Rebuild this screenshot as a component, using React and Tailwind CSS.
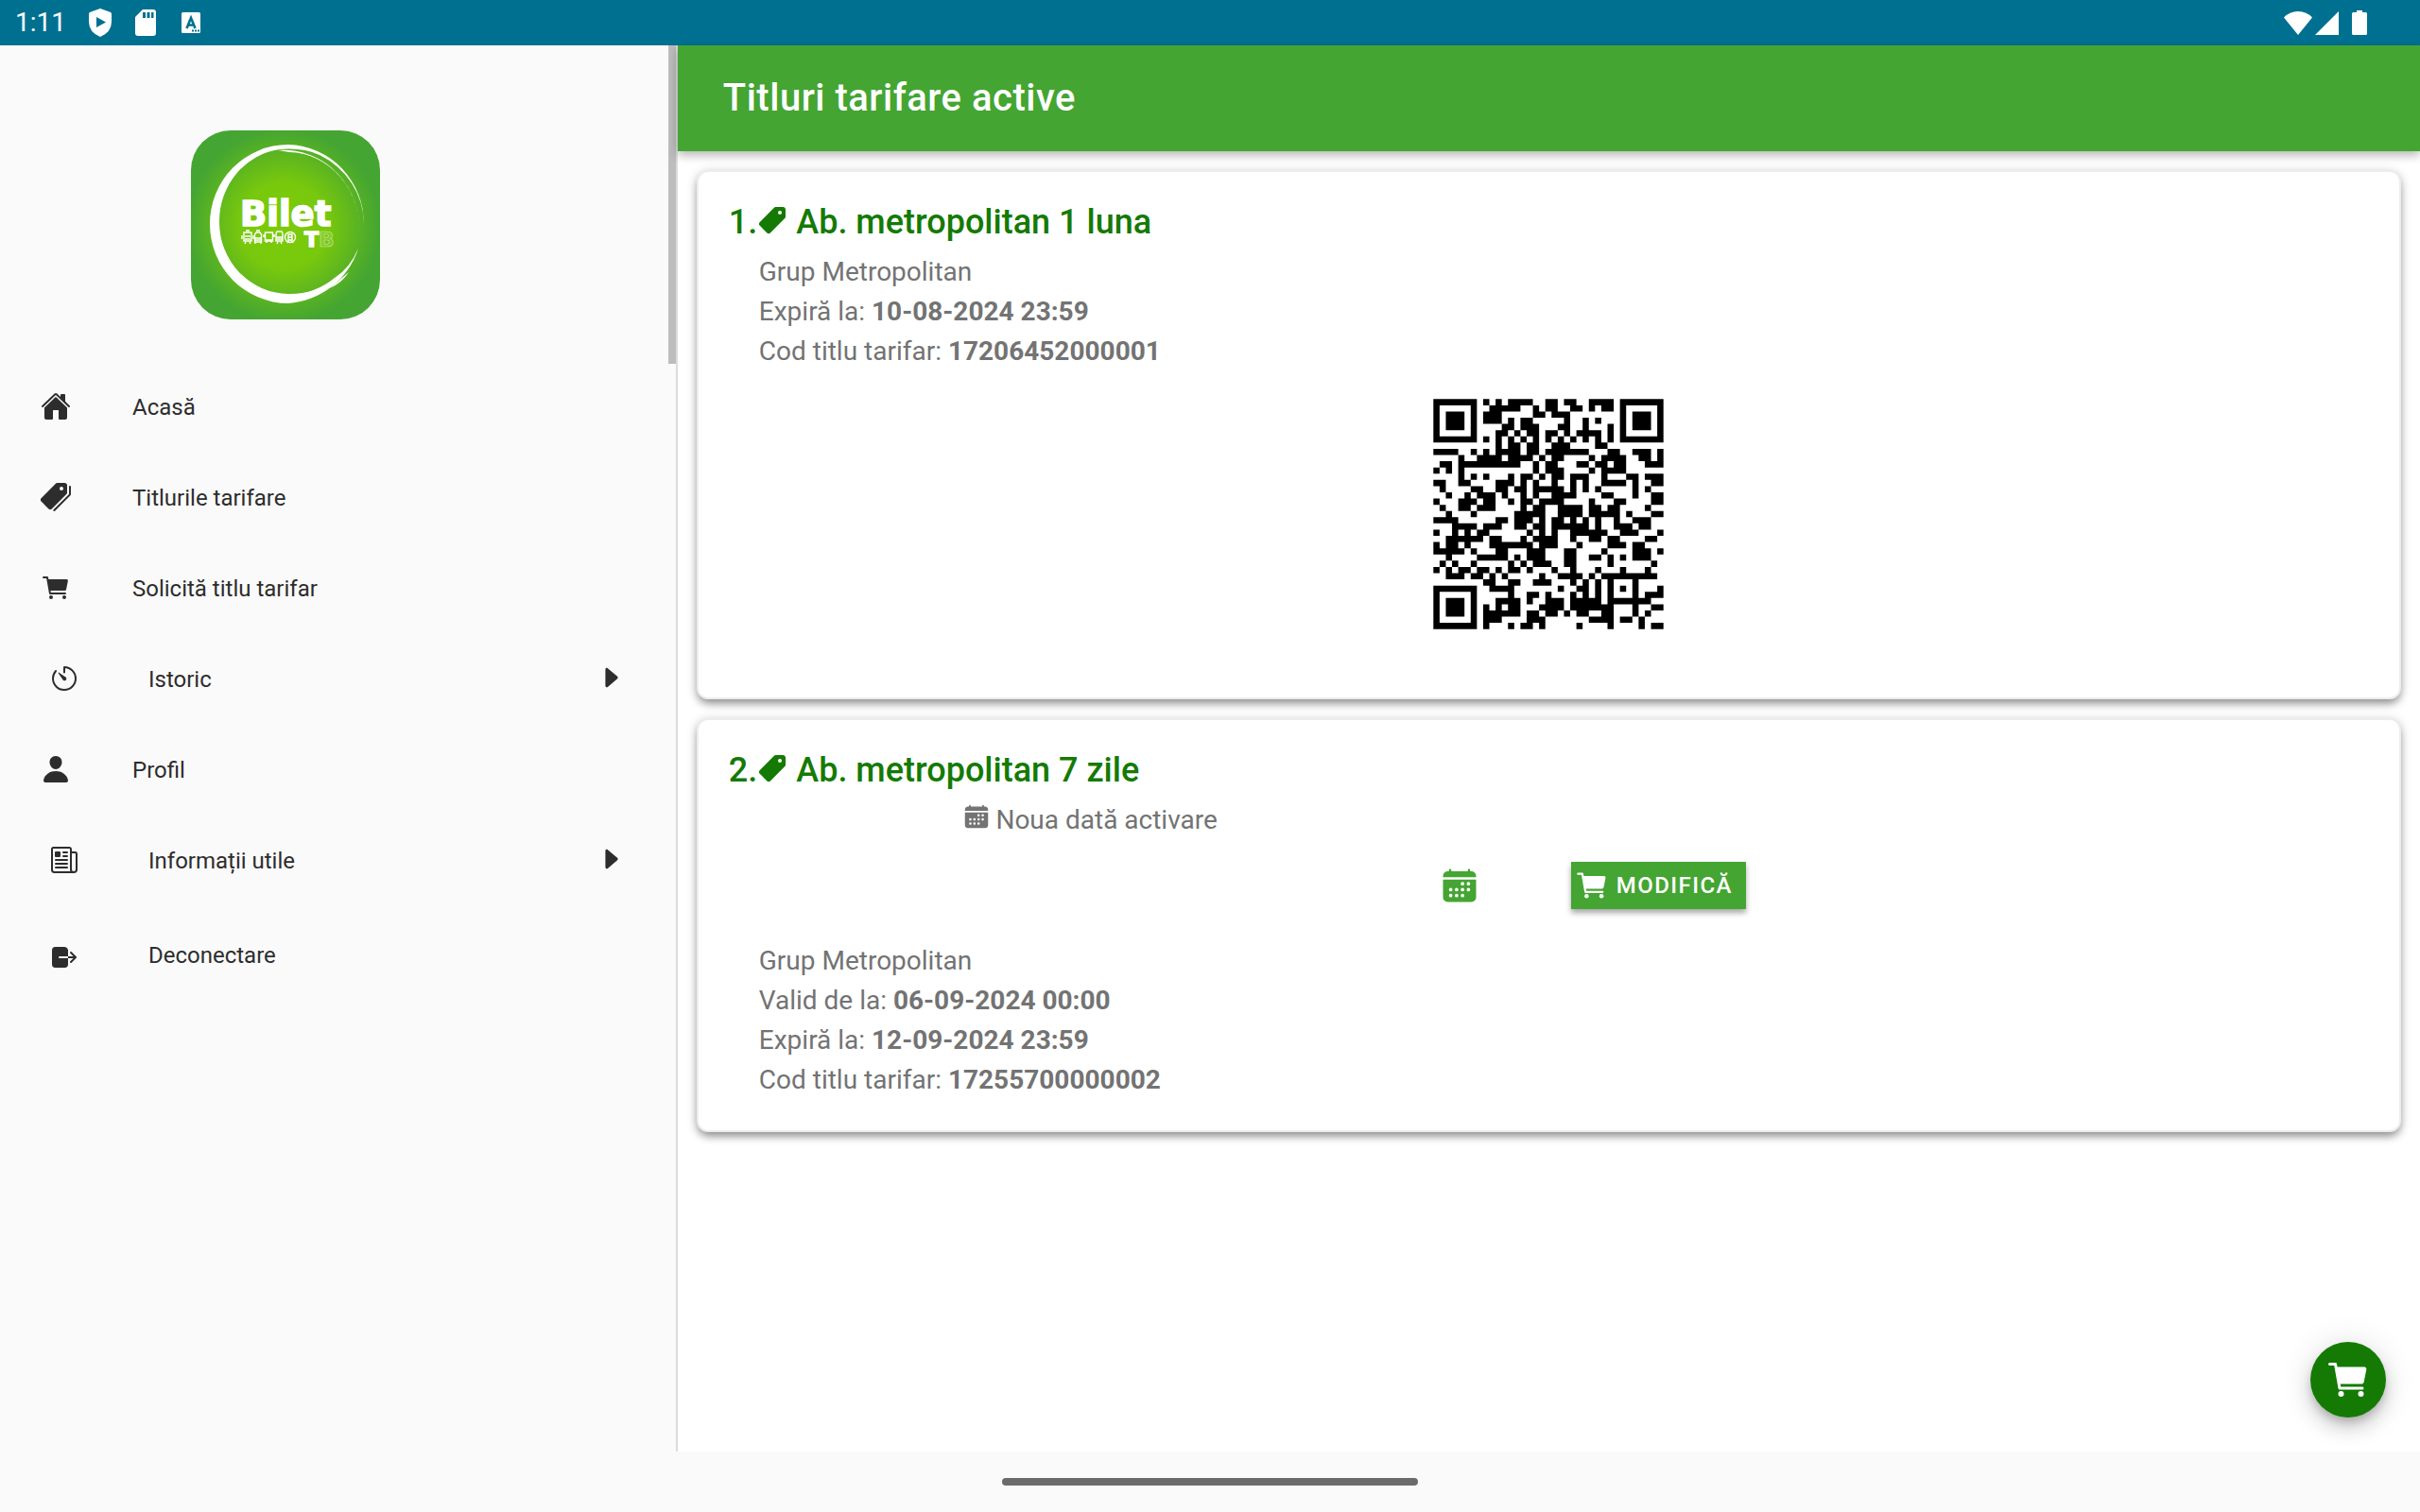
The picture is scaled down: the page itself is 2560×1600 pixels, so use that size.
import React from 'react';
import {
  IoHome,
  IoPricetags,
  IoPricetag,
  IoCart,
  IoTimerOutline,
  IoPerson,
  IoNewspaperOutline,
  IoLogOut,
  IoCaretForward,
  IoCalendar,
} from 'react-icons/io5';

const menu = [
  { label: 'Acasă', icon: IoHome },
  { label: 'Titlurile tarifare', icon: IoPricetags },
  { label: 'Solicită titlu tarifar', icon: IoCart },
  { label: 'Istoric', icon: IoTimerOutline, nested: true, caret: true },
  { label: 'Profil', icon: IoPerson },
  { label: 'Informații utile', icon: IoNewspaperOutline, nested: true, caret: true },
];

// dark runs per row, "from-to" or a single column
const qrRows = [
  '0-6 8 10 12-15 18-19 21-22 25-28 30-36',
  '0 6 9-13 16 18-19 22-23 25 27-28 30 36',
  '0 2-4 6 8-10 16-17 19-21 30 32-34 36',
  '0 2-4 6 8-10 12 14-15 21 24 26 30 32-34 36',
  '0 2-4 6 11-12 14-16 20-21 24 28 30 32-34 36',
  '0 6 10-11 13 15-16 18-19 21 23-26 28 30 36',
  '0-6 8 10 12 14 16 18 20 22 24 26 28 30-36',
  '10 12-13 15-16 19-21 26-27',
  '0-3 6 8 10-13 15-16 18-24 28-29 32-34 36',
  '4 7-10 12-15 17 19-20 25 27-30 33-34 36',
  '1-2 4-13 16 18-19 23-24 26-27 29-30 34-36',
  '0 2 4 16 18-20 25 27-30',
  '4 6 8 12 14-15 17 19-20 22-24 27 31-32 34-36',
  '0-1 4-5 10-12 14 16 19 22 24 27-30 32 35-36',
  '1 6-7 10-11 13-14 16-20 22 24 26 32 34',
  '2 5 7-9 11 14 16 19-22 27-28 32 35-36',
  '0 4-6 8-9 12 14-15 17-20 25 29-30 35-36',
  '1 4-5 7-9 14 16-17 20-23 25-26 28-29 34',
  '2 6 13-17 20-23 25-29 31 35-36',
  '0-3 10-11 13-15 17 19-20 22 24 26 29 32-34',
  '3-6 8-10 13-14 16-17 19-24 26 29-31 33-34',
  '0 3 5 7-8 15 17 19 22-27 30-32 36',
  '2-7 9-10 14 16-19 22 25-26 28-29 34-35',
  '0 2-3 5 9-15 17-19 23 28-30 32-33',
  '0-4 6 10-11 15-17 21-22 27 32-34 36',
  '2 7-11 13 15-17 21-22 25-26 28 30 32-34',
  '1 3 6 12 14 16-18 21-22 28 35',
  '0 2 4-5 7-8 10 12-13 15 19 22 26 30 34',
  '2-4 6-7 9 11 17 20-23 25 27-35',
  '8-9 12-13 16-18 22 24 26 28 32',
  '0-6 9-12 20 23-24 26 28 30 32 36',
  '0 6 12 15-16 18 22 24 26 28 32 34-36',
  '0 2-4 6 10-13 15 18-20 22-26 28-34',
  '0 2-4 6 8 10 12-13 17-20 22-28 32 35-36',
  '0 2-4 6 8-13 15-16 18-19 21 23-24 27-28 32 34',
  '0 6 8-10 15-17 25-28 30-31 33',
  '0-6 8 12 14-15 17 23 28 33 35-36',
];

const qrPath = qrRows
  .map((row, y) =>
    row
      .split(' ')
      .map((run) => {
        const [from, to = from] = run.split('-').map(Number);
        return `M${from} ${y}h${to - from + 1}v1H${from}z`;
      })
      .join('')
  )
  .join('');

const QrCode = () => (
  <svg viewBox="-4 -4 45 45" className="mx-auto mt-[3px] mb-[14px] block w-[296px]" role="img" aria-label="Cod QR">
    <path d={qrPath} fill="#000" />
  </svg>
);

const Logo = () => (
  <svg viewBox="0 0 200 200" className="h-[200px] w-[200px]">
    <defs>
      <radialGradient id="glow" gradientUnits="userSpaceOnUse" cx="98" cy="101" r="102">
        <stop offset="0" stopColor="#7ccb0a" />
        <stop offset="0.45" stopColor="#78c80d" />
        <stop offset="0.75" stopColor="#5cb520" />
        <stop offset="1" stopColor="#44a532" />
      </radialGradient>
    </defs>
    <rect width="200" height="200" rx="42" fill="url(#glow)" />
    <g fill="#fff">
      <path d="M177 125A84 84 0 0 1 103 183A83 84 0 0 1 103 15A82 84 0 0 1 183 99A84 82 0 0 0 136 26Q118 18 94 20A73 77 0 0 0 30 97A74 76 0 0 0 103 173A74 74 0 0 0 152 156Q168 146 177 125z" />
      <path d="M92 21A80 84 0 0 1 178 112A76 82 0 0 0 104 23z" />
      <path d="M167 150Q160 161 147 167Q157 158 167 150z" />
    </g>
    <text fontFamily="DejaVu Sans, sans-serif" fontWeight="700" fontSize="37" fill="#fff" stroke="#fff" strokeWidth="1.6">
      <tspan x="52" y="101">Bilet</tspan>
      <tspan x="120" y="123" fontSize="22">T</tspan>
      <tspan x="135" y="123" fontSize="22" fillOpacity="0.15" strokeOpacity="0.5" strokeWidth="0.7">B</tspan>
    </text>
    {/* Tram, trolleybus, bus, train, metro */}
    <g fill="none" stroke="#fff" strokeWidth="1.4">
      <path d="M56 108h8v9h-8zM54 111v4M66 111v4M58 106h4M57 112h6M57 115h6M57 120l1-2M63 120l-1-2" />
      <path d="M67.500 110l1.500-2h4l1.500 2v8h-7zM69 106h4M68 114h6M68 116h6M68 120v-2M74 120v-2" />
      <path d="M78.500 108h8v9h-8zM77 110v3M88 110v3M79 116h7M80 119v-2M85 119v-2" />
      <path d="M90 109l1-2h5l1 2v8h-7zM90 113h7M90 115h7M91 120l1-2M96 120l-1-2" />
      <circle cx="105" cy="113" r="5.500" />
      <path d="M103 110h4v6h-4zM103 113h4M102 119l2-3M108 119l-2-3" />
    </g>
  </svg>
);

const StatusBar = () => (
  <div className="flex h-12 items-center justify-between bg-[#007091] text-white">
    <div className="flex items-center pl-4">
      <span className="text-[28px] leading-[50px]">1:11</span>
      <svg viewBox="0 0 24 30" className="ml-6 h-[30px] w-6">
        <path
          fill="#fff"
          fillRule="evenodd"
          d="M12 0L23 4Q24 4.500 24 6v8Q24 25 12 30Q0 25 0 14V6Q0 4.500 1 4zM8 9v11l10-5.500z"
        />
      </svg>
      <svg viewBox="0 0 22 28" className="ml-[25px] h-7 w-[22px]">
        <path
          fill="#fff"
          fillRule="evenodd"
          d="M8 0h11a3 3 0 0 1 3 3v22a3 3 0 0 1-3 3H3a3 3 0 0 1-3-3V8zM8 3v6h3V3zM12.500 3v6h3V3zM17 3v6h2.500V3z"
        />
      </svg>
      <svg viewBox="0 0 20 22" className="ml-[27px] h-[22px] w-5">
        <rect width="20" height="22" rx="1.500" fill="#fff" />
        <path fill="none" stroke="#007091" strokeWidth="2.600" d="M5.500 17L10 6L14.500 17M7 13.500h6" />
        <path fill="none" stroke="#007091" strokeWidth="2" strokeDasharray="2 1" d="M11 19.500h8" />
      </svg>
    </div>
    <div className="flex items-center pr-14">
      <svg viewBox="0 0 30 25" className="h-[25px] w-[30px]">
        <path fill="#fff" d="M0 6.500Q6 0 15 0T30 6.500L15 25z" />
      </svg>
      <svg viewBox="0 0 25 25" className="ml-[3px] h-[25px] w-[25px]">
        <path fill="#fff" d="M25 0v25H0z" />
      </svg>
      <svg viewBox="0 0 16 26" className="ml-[14px] h-[26px] w-4">
        <path fill="#fff" d="M5 0h6v2h3.500Q16 2 16 3.500v21q0 1.500-1.500 1.500h-13Q0 26 0 24.500v-21Q0 2 1.500 2H5z" />
      </svg>
    </div>
  </div>
);

const MenuItem = ({ label, icon: Icon, nested, caret }) => (
  <button
    type="button"
    className={`flex h-24 w-full items-center pr-11 text-left text-2xl ${nested ? 'pl-[52px]' : 'pl-[43px]'}`}
  >
    <Icon className="mb-0.5 h-8 w-8 shrink-0" />
    <span className={`flex-1 ${nested ? 'ml-[73px]' : 'ml-[65px]'}`}>{label}</span>
    {caret && <IoCaretForward className="mb-1 h-8 w-8" />}
  </button>
);

const Sidebar = () => (
  <aside className="flex w-[28%] shrink-0 border-r-2 border-[#dcdcdc] bg-[#fafafa] text-[#2d2d2d]">
    <div className="min-w-0 flex-1">
      <div className="flex justify-center pt-[90px] pr-[102px] pb-[45px]">
        <Logo />
      </div>
      <nav>
        {menu.map((item) => (
          <MenuItem key={item.label} {...item} />
        ))}
        <button type="button" className="flex h-[104px] w-full items-center pl-[52px] text-left text-2xl">
          <IoLogOut className="mt-1 h-8 w-8 shrink-0" />
          <span className="ml-[73px]">Deconectare</span>
        </button>
      </nav>
    </div>
    {/* Scroll thumb */}
    <div className="h-[337px] w-2 bg-[#bdbdbd]" />
  </aside>
);

const Detail = ({ label, value }) => (
  <p>
    {label} <b>{value}</b>
  </p>
);

const TicketCard = ({ index, title, children }) => (
  <section className="rounded-xl border-2 border-[#ededed] bg-white px-8 py-8 shadow-[0_6px_10px_-2px_rgba(0,0,0,0.36),0_2px_12px_rgba(0,0,0,0.2)]">
    <h2 className="flex items-center text-[36px] leading-[42px] font-medium text-[#147a04]">
      {index}.
      <IoPricetag className="mr-[9px] mb-1 h-8 w-8" />
      {title}
    </h2>
    <div className="mt-[11px] pl-8 text-[28px] leading-[42px] text-[#737373]">{children}</div>
  </section>
);

const App = () => {
  return (
    <div className="flex min-h-screen flex-col bg-[#fafafa] font-[Roboto,sans-serif]">
      <StatusBar />
      <div className="flex flex-1">
        <Sidebar />
        <div className="relative flex min-w-0 flex-1 flex-col bg-white">
          <header className="bg-[#44a532] px-12 shadow-[0_4px_10px_rgba(0,0,0,0.3)]">
            <h1 className="text-[40px] leading-[112px] font-medium tracking-[0.0125em] text-white">
              Titluri tarifare active
            </h1>
          </header>
          <main className="flex flex-col gap-5 p-5">
            <TicketCard index={1} title="Ab. metropolitan 1 luna">
              <p>Grup Metropolitan</p>
              <Detail label="Expiră la:" value="10-08-2024 23:59" />
              <Detail label="Cod titlu tarifar:" value="17206452000001" />
              <div className="-ml-8">
                <QrCode />
              </div>
            </TicketCard>
            <TicketCard index={2} title="Ab. metropolitan 7 zile">
              <div className="flex w-5/12 items-center justify-center pr-2">
                <IoCalendar className="mr-1.5 mb-2 h-7 w-7" />
                Noua dată activare
              </div>
              <div className="mt-[23px] mb-[34px] -ml-8 flex justify-center">
                <button
                  type="button"
                  aria-label="Alege data"
                  className="flex w-[232px] items-center justify-center pr-1 text-[#44a532]"
                >
                  <IoCalendar className="h-10 w-10" />
                </button>
                <button
                  type="button"
                  className="flex h-[50px] items-center bg-[#44a532] pr-[14px] pl-1 text-2xl font-medium tracking-[0.06em] text-white shadow-[0_4px_6px_rgba(0,0,0,0.35)]"
                >
                  <IoCart className="mr-2 h-9 w-9" />
                  MODIFICĂ
                </button>
              </div>
              <p>Grup Metropolitan</p>
              <Detail label="Valid de la:" value="06-09-2024 00:00" />
              <Detail label="Expiră la:" value="12-09-2024 23:59" />
              <Detail label="Cod titlu tarifar:" value="17255700000002" />
            </TicketCard>
          </main>
          <button
            type="button"
            aria-label="Coș"
            className="absolute right-9 bottom-9 flex h-20 w-20 items-center justify-center rounded-full bg-[#147a04] text-white shadow-[0_6px_10px_-2px_rgba(0,0,0,0.2),0_12px_20px_rgba(0,0,0,0.14),0_2px_36px_rgba(0,0,0,0.12)]"
          >
            <IoCart className="h-12 w-12" />
          </button>
        </div>
      </div>
      {/* Gesture bar */}
      <div className="relative flex h-16 items-center justify-center bg-[#fafafa]">
        <div className="h-2 w-[440px] rounded-full bg-[#6b6b6b]" />
      </div>
    </div>
  );
};

export default App;
